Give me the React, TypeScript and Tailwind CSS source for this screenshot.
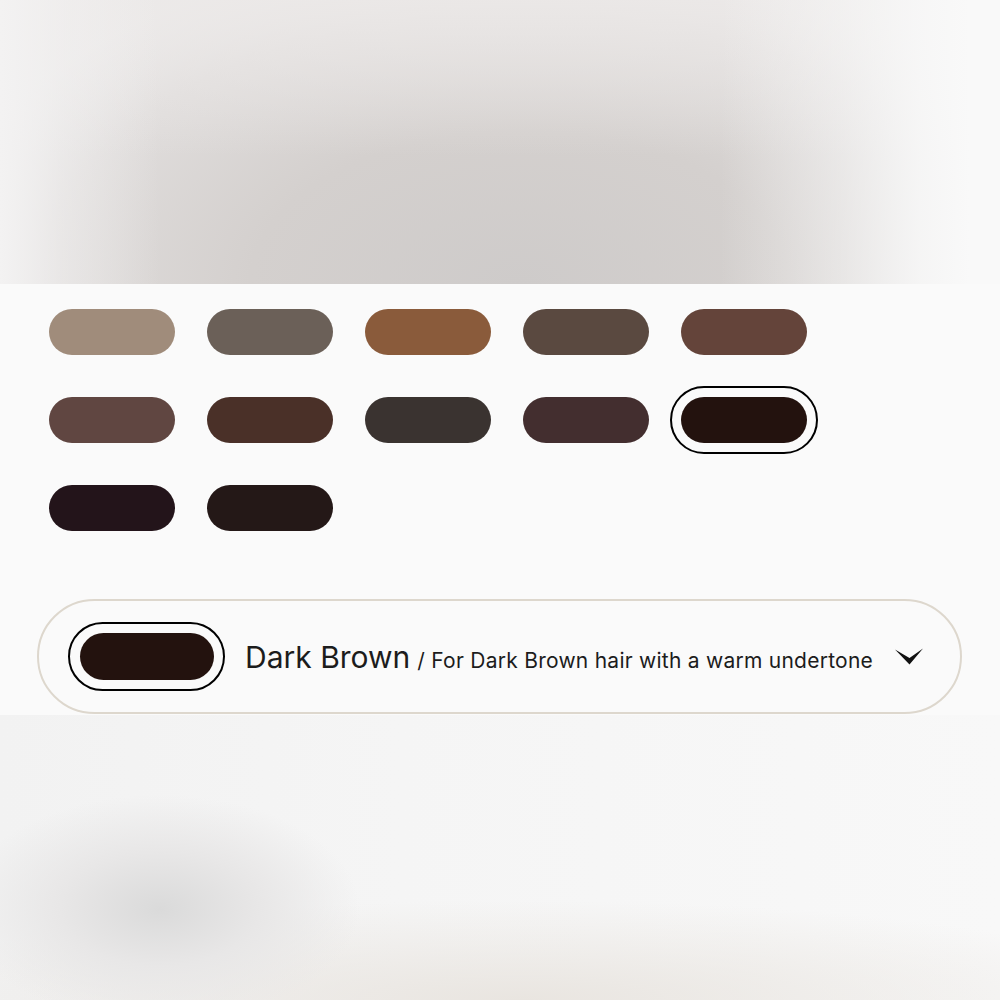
import React from "react";

type Shade = { name: string; color: string };

const shades: Shade[] = [
  { name: "Taupe", color: "bg-[#a08c7b]" },
  { name: "Soft Brown", color: "bg-[#6b6058]" },
  { name: "Auburn", color: "bg-[#8a5b3b]" },
  { name: "Medium Brown", color: "bg-[#5a4940]" },
  { name: "Chestnut", color: "bg-[#64443a]" },
  { name: "Cool Brown", color: "bg-[#604641]" },
  { name: "Warm Brown", color: "bg-[#4a3028]" },
  { name: "Ash Brown", color: "bg-[#3a3330]" },
  { name: "Deep Brown", color: "bg-[#432e2f]" },
  { name: "Dark Brown", color: "bg-[#23120e]" },
  { name: "Soft Black", color: "bg-[#23141a]" },
  { name: "Ebony", color: "bg-[#241817]" },
];

const selectedIndex = 9;

function Chevron() {
  return (
    <svg width="28" height="17" viewBox="0 0 28 17" className="shrink-0">
      <polygon points="0,1.5 14.5,16.5 28,0.5 14.5,10" fill="#111111" />
    </svg>
  );
}

export default function App() {
  return (
    <div
      className="w-[1000px] h-[1000px] flex flex-col overflow-hidden bg-[#f6f6f6]"
      style={{ fontFamily: "Inter, 'Open Sans', sans-serif" }}
    >
      {/* blurred backdrop above the panel */}
      <div className="h-[284px] shrink-0 bg-[linear-gradient(90deg,#f3f2f2_0%,rgba(243,242,242,0.5)_6%,rgba(243,242,242,0)_16%,rgba(248,248,248,0)_72%,rgba(248,248,248,0.5)_84%,rgba(248,248,248,0.9)_92%,#f9f9f9_97%),linear-gradient(180deg,rgba(236,233,232,0.85)_0%,rgba(236,233,232,0)_55%),radial-gradient(ellipse_60%_120%_at_52%_100%,#cecbca_0%,#d4d0ce_45%,#e0dddc_80%,#ebeaea_100%)]" />

      {/* shade picker panel */}
      <div className="h-[431px] shrink-0 bg-[#fafafa] flex flex-col">
        <div className="pl-[49px] pt-[25px] grid grid-cols-[repeat(5,126px)] gap-x-[32px] gap-y-[42px]">
          {shades.map((s, i) => (
            <div key={s.name} className="relative h-[46px]">
              <div className={`h-full w-full rounded-full ${s.color}`} />
              {i === selectedIndex && (
                <div className="absolute -inset-[11px] rounded-full border-2 border-black" />
              )}
            </div>
          ))}
        </div>

        <div className="mt-[68px] ml-[37px] w-[925px] h-[115px] rounded-full border-2 border-[#ddd7cd] flex items-center pl-[29px] pr-[37px]">
          <div className="relative w-[157px] h-[69px] rounded-full border-2 border-black flex items-center justify-center shrink-0">
            <div className="w-[134px] h-[47px] rounded-full bg-[#23120e]" />
          </div>
          <div className="ml-[20px] flex-1 flex items-baseline text-[#1c1c1c] whitespace-nowrap">
            <span className="text-[30px] leading-none">Dark Brown</span>
            <span className="text-[21px] leading-none tracking-[0.012em] ml-[7px]">/ For Dark Brown hair with a warm undertone</span>
          </div>
          <Chevron />
        </div>
      </div>

      {/* blurred backdrop below the panel */}
      <div className="flex-1 bg-[radial-gradient(ellipse_20%_40%_at_16%_68%,#dadada_0%,#e8e7e7_50%,rgba(243,243,243,0)_100%),radial-gradient(ellipse_65%_35%_at_52%_100%,#e9e5e0_0%,rgba(242,241,240,0)_100%),linear-gradient(90deg,#f2f2f2_0%,#f5f5f5_40%,#f8f8f8_100%)]" />
    </div>
  );
}
